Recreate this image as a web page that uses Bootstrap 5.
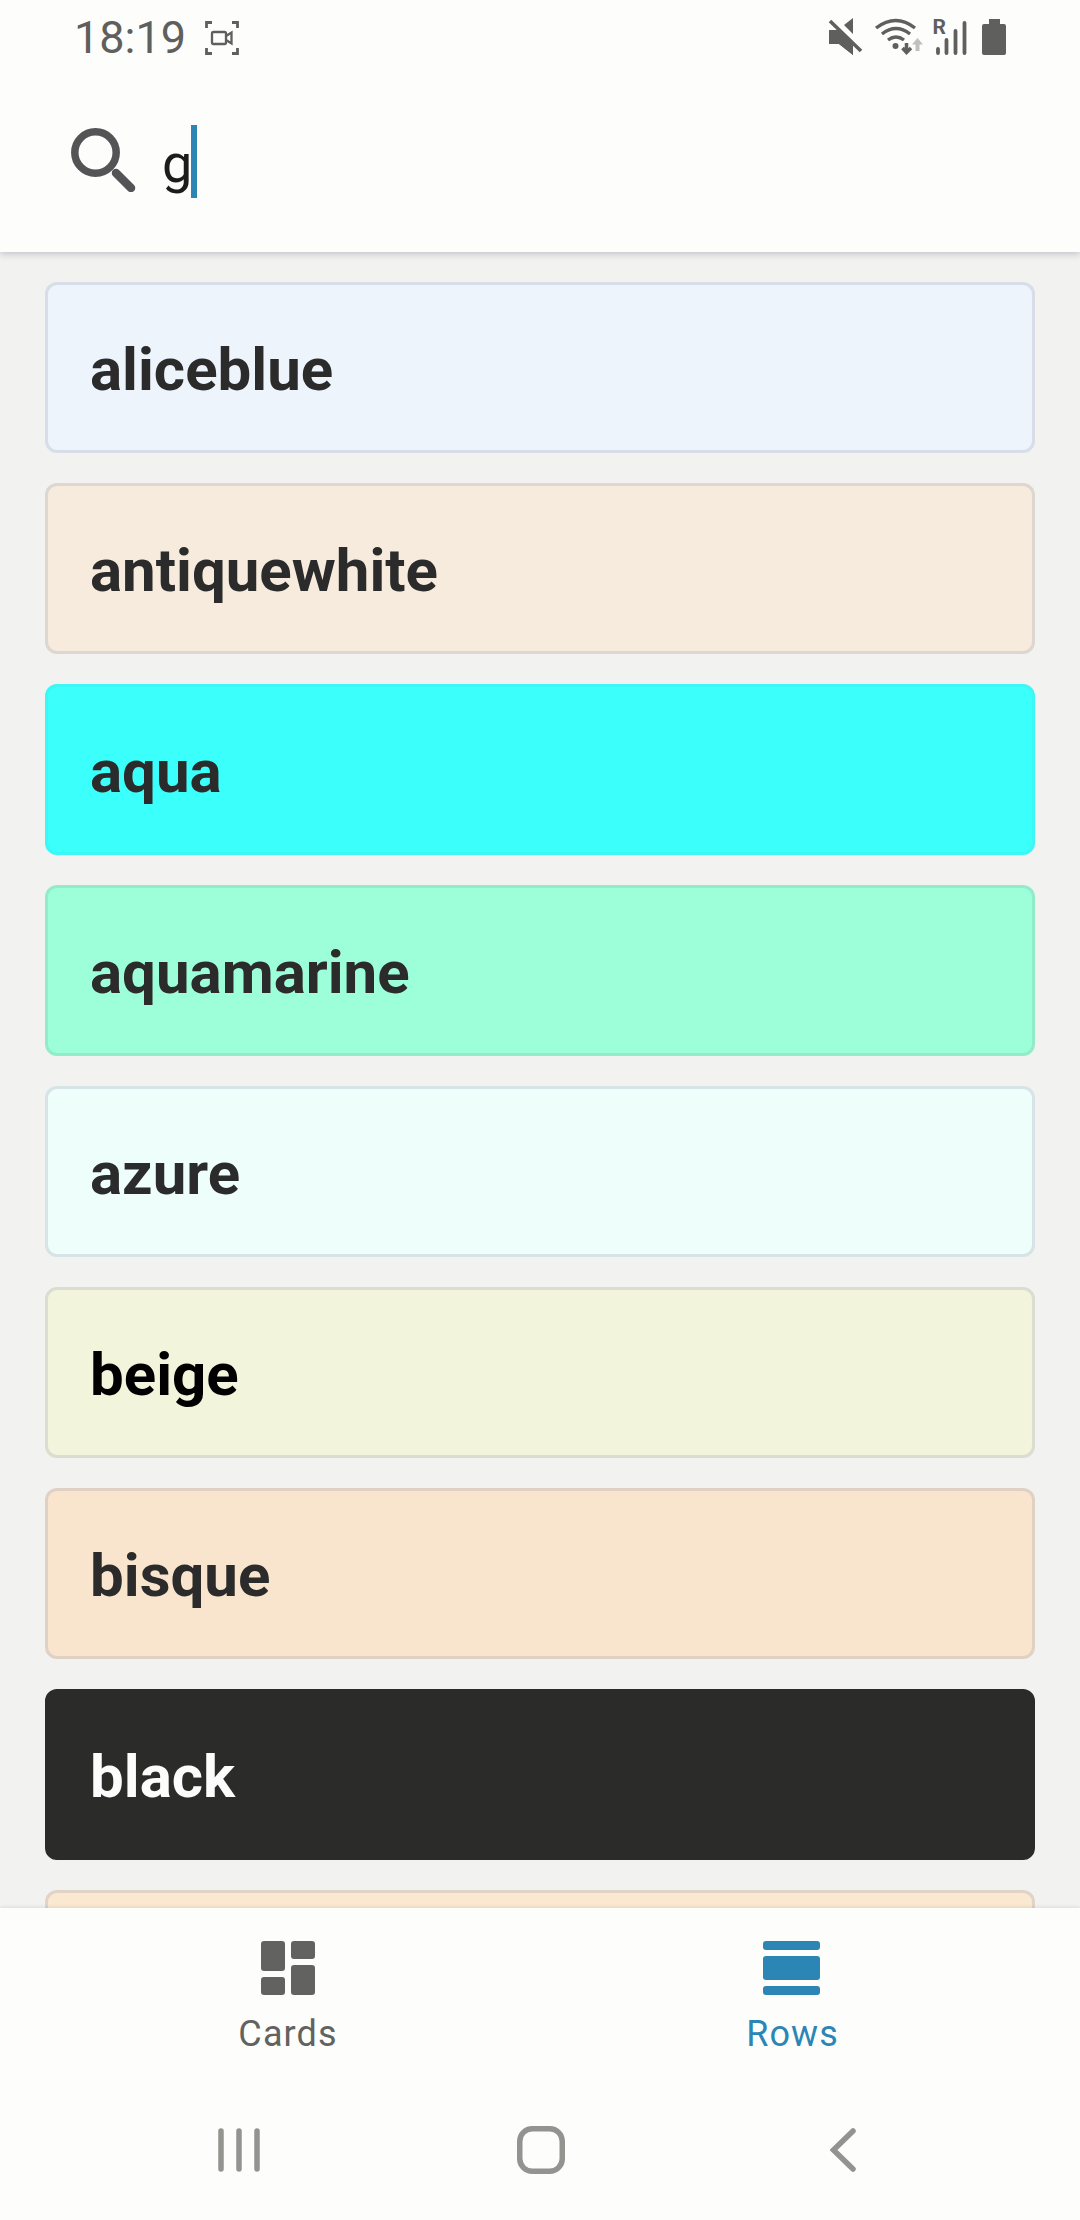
<!DOCTYPE html>
<html lang="en">
<head>
<meta charset="utf-8">
<meta name="viewport" content="width=device-width, initial-scale=1">
<title>Colours</title>
<link href="https://cdn.jsdelivr.net/npm/bootstrap@5.3.0/dist/css/bootstrap.min.css" rel="stylesheet">
<style>
body{font-family:Roboto,sans-serif;background:#f2f2f0;color:#2b2b2b}
.phone{width:1080px;height:2220px}
.surface{background:#fdfdfc}
.topbar{height:252px;box-shadow:0 2px 7px rgba(90,90,120,.32);z-index:2}
.status{height:76px;padding:0 73px 0 74px;color:#5f5f5d}
.clock{font-size:45px;line-height:76px}
.rec-icon{margin-left:19px;margin-top:-1px}
.search-line{height:132px;padding-left:71px}
.query{font-size:54px;line-height:73px;color:#1c1c1c;margin-left:25px;padding-top:3px}
.caret-bar{width:6px;height:73px;background:#2c86b5;margin-left:-1px;margin-top:1px}
.color-list{padding:30px 45px 0;gap:30px;min-height:0}
.color-row{height:171px;border:3px solid rgba(150,150,170,.25);border-radius:12px;padding:5px 0 0 42px;font-size:60px;font-weight:700}
.aliceblue{background:#eef4fb}.antiquewhite{background:#f6ebdc}
.aqua{background:#3bfffb;border-color:#3bf7f6}.aquamarine{background:#9cffd9;border-color:#92ecc9}
.azure{background:#edfefb}.beige{background:#f2f5dc;color:#000}.bisque{background:#f9e5cd}
.black{background:#2b2b29;border-color:#2b2b29;color:#fcfcfc}.blanched{background:#fae9d0}
.tabs-bar{height:162px;box-shadow:0 -1px 3px rgba(90,90,110,.15);z-index:2}
.tab-item{width:504px;padding-top:33px;color:#626260;font-size:36px;letter-spacing:1.1px}
.tab-item.on{color:#2c86b5;padding-right:2px}
.tab-item.on span{padding-left:3px}
.tab-item span{line-height:42px;margin-top:18px}
.sysnav{height:150px;padding:10px 224px 0 218px;z-index:2}
.home-key{margin-right:8px}
svg{display:block;flex:none}
</style>
<script src="https://cdn.jsdelivr.net/npm/bootstrap@5.3.0/dist/js/bootstrap.bundle.min.js"></script>
</head>
<body>
<div class="phone d-flex flex-column overflow-hidden">
  <header class="topbar surface position-relative flex-shrink-0">
    <div class="status d-flex align-items-center justify-content-between">
      <div class="d-flex align-items-center">
        <span class="clock">18:19</span>
        <svg class="rec-icon" width="34" height="34" viewBox="0 0 34 34" fill="none" stroke="currentColor" stroke-width="2.8"><path d="M1.500 7V1.500H7M27 1.500H32.500V7M32.500 27V32.500H27M7 32.500H1.500V27"/><rect x="7" y="11" width="14" height="12" rx="1.500" stroke-width="2.300"/><path d="M21 15L26.500 11.500V22.500L21 19" stroke-width="2.300"/></svg>
      </div>
      <svg width="180" height="62" viewBox="827 7 180 62" fill="currentColor"><path d="M829 31Q829 30 830 30H834L853 48V55L839 44H830Q829 44 829 43ZM844 25L853 18V34Z"/><path d="M830 21L861 51" stroke="#fdfdfc" stroke-width="6"/><path d="M829 44V31Q829 30 830 30H838L853 45V55L839 44Z"/><path d="M830 21L861 51" stroke="currentColor" stroke-width="3.600"/><g fill="none" stroke="currentColor" stroke-width="3.400"><path d="M876 28Q896 13 915 28M882 34Q896 23 910 34M888 40Q896 34 904 40"/><path d="M906.500 43V52M902.500 48L906.500 52.500L911 48" stroke-width="3.500"/></g><circle cx="895.500" cy="46" r="3"/><path d="M917.500 38L923 44.500H919.500V51H915.500V44.500H912Z" fill="#c0c0be"/><text x="932.500" y="33.500" font-size="21" font-weight="700">R</text><path d="M938 49V53M946.500 40V53M955.500 31V53M964.500 23V53" stroke="currentColor" stroke-width="3.800" stroke-linecap="round"/><path d="M989 19H1000V24H1004Q1006 24 1006 26V53Q1006 55 1004 55H984Q982 55 982 53V26Q982 24 984 24H989Z"/></svg>
    </div>
    <div class="search-line d-flex">
      <svg class="mt-5" width="66" height="68" viewBox="71 124 66 68" fill="none" stroke="#545457"><circle cx="95.500" cy="152.500" r="20.700" stroke-width="7.500"/><path d="M116 173L131 188" stroke-width="8.500" stroke-linecap="round"/></svg>
      <div class="d-flex mt-5"><span class="query">g</span><span class="caret-bar"></span></div>
    </div>
  </header>
  <main class="color-list d-flex flex-column flex-grow-1 overflow-hidden">
    <div class="color-row aliceblue d-flex align-items-center flex-shrink-0">aliceblue</div>
    <div class="color-row antiquewhite d-flex align-items-center flex-shrink-0">antiquewhite</div>
    <div class="color-row aqua d-flex align-items-center flex-shrink-0">aqua</div>
    <div class="color-row aquamarine d-flex align-items-center flex-shrink-0">aquamarine</div>
    <div class="color-row azure d-flex align-items-center flex-shrink-0">azure</div>
    <div class="color-row beige d-flex align-items-center flex-shrink-0">beige</div>
    <div class="color-row bisque d-flex align-items-center flex-shrink-0">bisque</div>
    <div class="color-row black d-flex align-items-center flex-shrink-0">black</div>
    <div class="color-row blanched flex-shrink-0"></div>
  </main>
  <nav class="tabs-bar surface position-relative d-flex justify-content-center flex-shrink-0">
    <div class="tab-item d-flex flex-column align-items-center">
      <svg width="54" height="54" fill="currentColor"><rect width="24" height="30" rx="3"/><rect x="30" width="24" height="18" rx="3"/><rect y="36" width="24" height="18" rx="3"/><rect x="30" y="24" width="24" height="30" rx="3"/></svg>
      <span>Cards</span>
    </div>
    <div class="tab-item on d-flex flex-column align-items-center">
      <svg width="57" height="54" fill="currentColor"><rect width="57" height="9" rx="3"/><rect y="15" width="57" height="24" rx="3"/><rect y="45" width="57" height="9" rx="3"/></svg>
      <span>Rows</span>
    </div>
  </nav>
  <footer class="sysnav surface position-relative d-flex justify-content-between align-items-center flex-shrink-0">
    <svg width="42" height="44" stroke="#93938f" stroke-width="5.500" stroke-linecap="round"><path d="M3 3V41M21 3V41M39 3V41"/></svg>
    <svg class="home-key" width="48" height="48" fill="none" stroke="#93938f" stroke-width="5.500"><rect x="2.750" y="2.750" width="42.500" height="42.500" rx="12.500"/></svg>
    <svg width="26" height="44" fill="none" stroke="#93938f" stroke-width="5.500" stroke-linecap="round"><path d="M23 3L3.500 22L23 41"/></svg>
  </footer>
</div>
</body>
</html>
